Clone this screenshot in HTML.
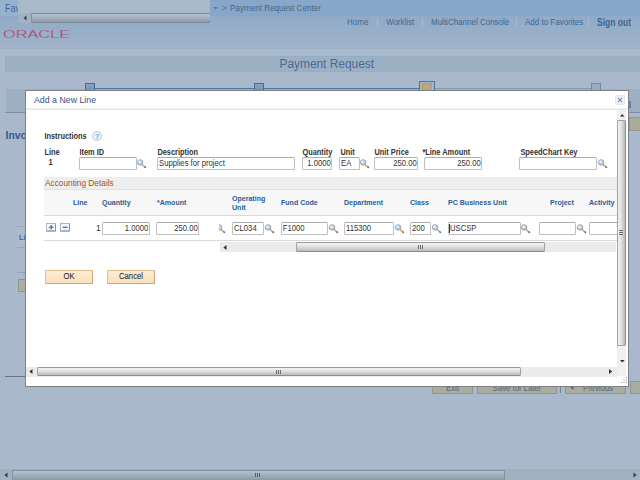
<!DOCTYPE html>
<html>
<head>
<meta charset="utf-8">
<title>Payment Request</title>
<style>
html,body{margin:0;padding:0;}
body{width:640px;height:480px;overflow:hidden;position:relative;background:#a9b8ca;font-family:"Liberation Sans",Arial,sans-serif;font-size:9px;color:#333;}
.abs{position:absolute;}
div,span{box-sizing:border-box;}
/* ---------- dimmed page behind ---------- */
#topnav{left:0;top:0;width:640px;height:16px;background:#86a7c9;}
#hdr{left:0;top:16px;width:640px;height:34px;background:linear-gradient(#90aac8,#a2b4c9);}
#band{left:0;top:50px;width:640px;height:6px;background:#a7b9cc;border-top:1px solid #b0c0d0;}
#fav{left:5px;top:2.5px;font-size:9px;color:#48678f;}
#ovl{overflow:hidden;left:17.5px;top:0;width:192.5px;height:22.8px;background:#a9bacb;}
#ovl .sb{left:0;top:13px;width:193px;height:10px;background:#a3b2c1;}
#ovl .thumb{left:13px;top:13px;width:190px;height:10px;background:linear-gradient(#b6c2ce,#a3b0bd 50%,#8a98a7);border:1px solid #8391a0;border-top-color:#7e8c9b;border-bottom-color:#7d8a98;border-radius:1px;}
#crumb{left:213px;top:3.5px;font-size:8px;color:#4a6688;white-space:nowrap;}
.lnk{top:17.5px;font-size:8px;color:#3f668f;white-space:nowrap;}
.sep{top:18px;width:1px;height:9px;background:#a7bad0;}
#ptitle{left:5px;top:55.5px;width:640px;height:16px;background:#9cb0c4;border:1px solid #98adc2;}
#ptitle span{left:273.5px;top:0px;font-size:11.9px;color:#4a6a92;white-space:nowrap;}
.trainline{top:87.8px;height:1.5px;background:#4f76a6;}
.stop{width:10px;height:10px;top:83px;background:linear-gradient(#8ca5c3,#7090b4 80%);border:1px solid #436b9f;z-index:2;}
.pbtn{top:381px;height:13px;background:#a9ad9e;border:1px solid #92968b;font-size:7.7px;color:#4b6582;text-align:center;line-height:14px;}
/* ---------- modal ---------- */
#modal{z-index:5;left:25px;top:90px;width:604px;height:297px;background:#fff;border:1px solid #7f7f86;}
#mi{left:-1px;top:0;width:0;height:0;}
#mtitle{left:9px;top:4px;font-size:8.8px;color:#2d5487;white-space:nowrap;}
#mline{left:1px;top:17px;width:602px;height:2px;background:linear-gradient(#f1f5f4,#dde6e4);}
#mclose{left:590px;top:4px;width:10px;height:10px;border:1px solid #e6e9ea;border-radius:2px;background:#f0f2f2;}
.lbl{font-size:7.4px;font-weight:bold;color:#333;white-space:nowrap;}
.hl{font-size:7.05px;font-weight:bold;color:#2a5c9c;white-space:nowrap;line-height:9px;}
.inp{height:13px;border:1px solid #c0c0c0;border-top-color:#adadad;border-radius:1.5px;background:#fff;font-size:7.7px;line-height:12px;color:#333;padding:0 1px 0 1px;white-space:nowrap;overflow:hidden;}
.r{text-align:right;padding-right:0.2px !important;}
.btn{height:14px;width:48px;background:linear-gradient(#fcecd2,#f8dfba);border:1px solid #e2bf93;border-right-color:#d0a676;border-bottom-color:#d0a676;border-radius:1px;font-size:7.7px;text-align:center;line-height:12px;color:#111;}
svg{position:absolute;overflow:visible;}
.t{display:inline-block;transform:scaleY(1.22);}
.lnk,#fav,#crumb,#crumb2{transform:scaleY(1.18);}
#mtitle,#ptitle span{transform:scaleY(1.1);}
.lbl{transform:scaleY(1.13);margin-top:-0.5px;margin-left:0.4px}
.hl{transform:scaleY(1.03);}
</style>
</head>
<body>
<!-- dimmed background page -->
<div id="topnav" class="abs"></div>
<div id="hdr" class="abs"></div>
<div id="band" class="abs"></div>
<div class="abs" style="left:0;top:0;width:18px;height:16px;background:#96b2cf"></div>
<div id="fav" class="abs">Fav</div>
<div id="ovl" class="abs"><div class="sb abs"></div><div class="thumb abs"></div>
<svg style="left:5px;top:15px" width="4" height="6"><path d="M3.5 0.5 L0.5 3 L3.5 5.5Z" fill="#3a4450"/></svg></div>
<svg style="left:213px;top:7px" width="5" height="3"><path d="M0 0H5L2.5 2.6Z" fill="#5779a6"/></svg><div id="crumb" class="abs" style="left:222px">&gt;</div><div id="crumb2" class="abs" style="left:230px;top:3.5px;font-size:8.1px;color:#4a6688;white-space:nowrap">Payment Request Center</div>

<div class="abs lnk" style="left:347px">Home</div>
<div class="abs sep" style="left:377px"></div>
<div class="abs lnk" style="left:386px">Worklist</div>
<div class="abs sep" style="left:422px"></div>
<div class="abs lnk" style="left:431px">MultiChannel Console</div>
<div class="abs sep" style="left:516px"></div>
<div class="abs lnk" style="left:525px">Add to Favorites</div>
<div class="abs sep" style="left:588px"></div>
<div class="abs lnk" style="left:597px;font-weight:bold;top:17px;font-size:8.5px">Sign out</div>

<svg style="left:3px;top:30px" width="68" height="9" viewBox="0 0 68 9">
<text x="0" y="8" font-family="Liberation Sans, Arial, sans-serif" font-size="10.8" fill="#c03053" stroke="#93acc8" stroke-width="0.3" textLength="67" lengthAdjust="spacingAndGlyphs">ORACLE</text>
</svg>

<div id="ptitle" class="abs"><span class="abs">Payment Request</span></div>

<div class="abs trainline" style="left:90px;width:340px"></div>
<div class="abs trainline" style="left:430px;width:166px;top:88.3px;height:1px;background:#8599b3"></div>
<div class="abs stop" style="left:85px"></div>
<div class="abs stop" style="left:254px"></div>
<div class="abs" style="z-index:2;left:419px;top:80.5px;width:16px;height:12px;background:#a3b5cb;border:1.3px solid #4c74a5;"></div>
<div class="abs" style="z-index:2;left:421.7px;top:83px;width:10.6px;height:10px;background:#b8a67e;border:1px solid #c39a52;"></div>
<div class="abs stop" style="left:591px;background:#9aacc3;border-color:#7189a9"></div>

<div class="abs" style="left:5.5px;top:129.7px;font-size:10.4px;font-weight:bold;color:#34598f;">Invo</div>
<div class="abs" style="left:6px;top:89px;width:640px;height:23px;background:#9fafc2;"></div>
<div class="abs" style="left:5px;top:112px;width:640px;height:1px;background:#7f8fa3;"></div>
<div class="abs" style="left:17px;top:226.3px;width:9px;height:1px;background:#93a5ba;"></div>
<div class="abs" style="left:17px;top:227px;width:9px;height:20px;background:#acbbcc;"></div>
<div class="abs" style="left:17px;top:247px;width:9px;height:1px;background:#93a5ba;"></div>
<div class="abs" style="left:17px;top:272px;width:9px;height:1px;background:#93a5ba;"></div>
<div class="abs" style="left:19px;top:232.5px;font-size:7.5px;font-weight:bold;color:#3d66a0;">Li</div>
<div class="abs" style="left:5px;top:376px;width:20px;height:1px;background:#66748a;"></div>
<div class="abs" style="left:18px;top:279px;width:8px;height:13px;background:#adae9f;border:1px solid #8f9488;"></div>

<div class="abs pbtn" style="left:432px;width:41px;"><span class="t">Exit</span></div>
<div class="abs pbtn" style="left:477px;width:80px;"><span class="t">Save for Later</span></div>
<div class="abs pbtn" style="left:565px;width:61px;padding-left:5px"><span class="t">Previous</span></div>
<svg style="left:570px;top:385px" width="4" height="5"><path d="M3.5 0 L0.3 2.5 L3.5 5Z" fill="#3d6ca8"/></svg>
<div class="abs pbtn" style="left:630px;width:20px;"></div>
<div class="abs" style="left:560px;top:384px;width:1px;height:9px;background:#6f86a4;"></div>

<!-- right side bits of page peeking -->
<div class="abs" style="left:629px;top:101px;width:1.6px;height:7px;background:#5f82ad;"></div>
<div class="abs" style="left:629px;top:117px;width:12px;height:14px;background:#a9ab9d;border:1px solid #94978c;"></div>

<!-- page horizontal scrollbar -->
<div class="abs" style="left:0;top:469.3px;width:640px;height:11px;background:#a2b0bf;"></div>
<div class="abs" style="left:12px;top:469.5px;width:492.5px;height:11px;background:linear-gradient(#b5c1cd,#a0adbb 50%,#8a98a7);border:1px solid #8291a1;border-top-color:#7c8a9a;border-radius:1px;"></div>
<svg style="left:4px;top:472px" width="4" height="6"><path d="M3.5 0.5 L0.5 3 L3.5 5.5Z" fill="#2e3946"/></svg>
<svg style="left:633px;top:472px" width="4" height="6"><path d="M0.5 0.5 L3.5 3 L0.5 5.5Z" fill="#2e3946"/></svg>
<div class="abs" style="left:255px;top:473px;width:5px;height:4px;background:repeating-linear-gradient(90deg,#55616f 0,#55616f 1px,transparent 1px,transparent 2px);"></div>

<!-- modal -->
<div id="modal" class="abs"><div id="mi" class="abs">
  <div id="mtitle" class="abs">Add a New Line</div>
  <div id="mline" class="abs"></div>
  <div id="mclose" class="abs"><svg style="left:2px;top:2px" width="4" height="4"><path d="M0 0L4 4M4 0L0 4" stroke="#7b9bba" stroke-width="1.1"/></svg></div>
  <div class="abs lbl" style="left:19px;top:41px">Instructions</div>
  <svg style="left:67px;top:40px" width="10" height="10" viewBox="0 0 10 10"><circle cx="5" cy="5" r="4.4" fill="#eef4fa" stroke="#b0c5dc" stroke-width="1"/><text x="5" y="7.6" text-anchor="middle" font-family="Liberation Sans, Arial, sans-serif" font-size="7.5" font-weight="bold" fill="#7aa1d0">?</text></svg>
  <div class="abs lbl" style="left:19px;top:57px">Line</div>
  <div class="abs lbl" style="left:54px;top:57px">Item ID</div>
  <div class="abs lbl" style="left:132px;top:57px">Description</div>
  <div class="abs lbl" style="left:277px;top:57px">Quantity</div>
  <div class="abs lbl" style="left:315px;top:57px">Unit</div>
  <div class="abs lbl" style="left:349px;top:57px">Unit Price</div>
  <div class="abs lbl" style="left:397px;top:57px">*Line Amount</div>
  <div class="abs lbl" style="left:495px;top:57px">SpeedChart Key</div>
  <div class="abs lbl" style="left:23px;top:67px">1</div>
  <div class="abs inp" style="left:54px;top:66px;width:58px"></div>
  <div class="abs inp" style="left:132px;top:66px;width:138px"><span class="t">Supplies for project</span></div>
  <div class="abs inp r" style="left:277px;top:66px;width:30px"><span class="t">1.0000</span></div>
  <div class="abs inp" style="left:314px;top:66px;width:21px"><span class="t">EA</span></div>
  <div class="abs inp r" style="left:349px;top:66px;width:44px"><span class="t">250.00</span></div>
  <div class="abs inp r" style="left:399px;top:66px;width:58px"><span class="t">250.00</span></div>
  <div class="abs inp" style="left:494px;top:66px;width:78px"></div>
  <svg style="left:112.3px;top:67px" width="10" height="10" viewBox="0 0 10 10"><path d="M5.4 6.9L8.1 9.1" stroke="#dfa458" stroke-width="1.5" stroke-linecap="round"/><path d="M7.9 8.9L8.5 9.4" stroke="#4f74ad" stroke-width="1.4" stroke-linecap="round"/><circle cx="3.1" cy="4.4" r="2.75" fill="#a9d3f4" stroke="#988f8c" stroke-width="0.75"/><circle cx="2.5" cy="3.7" r="1.3" fill="#e6f4fe"/></svg>
  <svg style="left:335px;top:67px" width="10" height="10" viewBox="0 0 10 10"><path d="M5.4 6.9L8.1 9.1" stroke="#dfa458" stroke-width="1.5" stroke-linecap="round"/><path d="M7.9 8.9L8.5 9.4" stroke="#4f74ad" stroke-width="1.4" stroke-linecap="round"/><circle cx="3.1" cy="4.4" r="2.75" fill="#a9d3f4" stroke="#988f8c" stroke-width="0.75"/><circle cx="2.5" cy="3.7" r="1.3" fill="#e6f4fe"/></svg>
  <svg style="left:572.5px;top:67px" width="10" height="10" viewBox="0 0 10 10"><path d="M5.4 6.9L8.1 9.1" stroke="#dfa458" stroke-width="1.5" stroke-linecap="round"/><path d="M7.9 8.9L8.5 9.4" stroke="#4f74ad" stroke-width="1.4" stroke-linecap="round"/><circle cx="3.1" cy="4.4" r="2.75" fill="#a9d3f4" stroke="#988f8c" stroke-width="0.75"/><circle cx="2.5" cy="3.7" r="1.3" fill="#e6f4fe"/></svg>
  <div class="abs" style="left:19px;top:86px;width:573px;height:13px;background:#eeeeee;border-bottom:1px solid #dde3e3;overflow:hidden"><span class="abs acc" style="left:1px;top:1px;font-size:8.3px;line-height:10px;color:#a8521e;white-space:nowrap">Accounting Details</span></div>
  <div class="abs" style="left:19px;top:99px;width:573px;height:26px;background:#f7f7f7;border-bottom:1px solid #d9dadb;"></div>
  <div class="abs hl" style="left:48px;top:107px">Line</div>
  <div class="abs hl" style="left:77px;top:107px">Quantity</div>
  <div class="abs hl" style="left:132px;top:107px">*Amount</div>
  <div class="abs hl" style="left:256px;top:107px">Fund Code</div>
  <div class="abs hl" style="left:319px;top:107px">Department</div>
  <div class="abs hl" style="left:385px;top:107px">Class</div>
  <div class="abs hl" style="left:423px;top:107px">PC Business Unit</div>
  <div class="abs hl" style="left:525px;top:107px">Project</div>
  <div class="abs hl" style="left:564px;top:107px">Activity</div>
  <div class="abs hl" style="left:207px;top:103px">Operating<br>Unit</div>
  <div class="abs" style="left:19px;top:149.2px;width:573px;height:1px;background:#d9dadb;"></div>
  <svg style="left:21px;top:132px" width="10" height="8.5" viewBox="0 0 10 8.5"><rect x="0.5" y="0.5" width="9" height="7.5" fill="#f4f7fb" stroke="#a9b7ca"/><path d="M0.5 8H9.5V0.5" fill="none" stroke="#7f90aa"/><path d="M2.7 4.25H7.6M5.15 2.1V6.4" stroke="#2a5aa2" stroke-width="1.1"/></svg>
  <svg style="left:35px;top:132px" width="10" height="8.5" viewBox="0 0 10 8.5"><rect x="0.5" y="0.5" width="9" height="7.5" fill="#f4f7fb" stroke="#a9b7ca"/><path d="M0.5 8H9.5V0.5" fill="none" stroke="#7f90aa"/><path d="M2.7 4.25H7.6" stroke="#2a5aa2" stroke-width="1.1"/></svg>
  <div class="abs" style="left:71px;top:132px;font-size:8.5px;color:#333">1</div>
  <div class="abs inp r" style="left:77px;top:131px;width:47.5px"><span class="t">1.0000</span></div>
  <div class="abs inp r" style="left:131px;top:131px;width:43px"><span class="t">250.00</span></div>
  <div class="abs inp" style="left:207px;top:131px;width:32px"><span class="t">CL034</span></div>
  <div class="abs inp" style="left:255.7px;top:131px;width:47.5px"><span class="t">F1000</span></div>
  <div class="abs inp" style="left:319px;top:131px;width:50px"><span class="t">115300</span></div>
  <div class="abs inp" style="left:385px;top:131px;width:21px"><span class="t">200</span></div>
  <div class="abs inp" style="left:423px;top:131px;width:73px"><span class="t">USCSP</span></div>
  <div class="abs inp" style="left:514px;top:131px;width:37px"></div>
  <div class="abs inp" style="left:564px;top:131px;width:31px"></div>
  <svg style="left:240px;top:132px" width="10" height="10" viewBox="0 0 10 10"><path d="M5.4 6.9L8.1 9.1" stroke="#dfa458" stroke-width="1.5" stroke-linecap="round"/><path d="M7.9 8.9L8.5 9.4" stroke="#4f74ad" stroke-width="1.4" stroke-linecap="round"/><circle cx="3.1" cy="4.4" r="2.75" fill="#a9d3f4" stroke="#988f8c" stroke-width="0.75"/><circle cx="2.5" cy="3.7" r="1.3" fill="#e6f4fe"/></svg>
  <svg style="left:304px;top:132px" width="10" height="10" viewBox="0 0 10 10"><path d="M5.4 6.9L8.1 9.1" stroke="#dfa458" stroke-width="1.5" stroke-linecap="round"/><path d="M7.9 8.9L8.5 9.4" stroke="#4f74ad" stroke-width="1.4" stroke-linecap="round"/><circle cx="3.1" cy="4.4" r="2.75" fill="#a9d3f4" stroke="#988f8c" stroke-width="0.75"/><circle cx="2.5" cy="3.7" r="1.3" fill="#e6f4fe"/></svg>
  <svg style="left:369.7px;top:132px" width="10" height="10" viewBox="0 0 10 10"><path d="M5.4 6.9L8.1 9.1" stroke="#dfa458" stroke-width="1.5" stroke-linecap="round"/><path d="M7.9 8.9L8.5 9.4" stroke="#4f74ad" stroke-width="1.4" stroke-linecap="round"/><circle cx="3.1" cy="4.4" r="2.75" fill="#a9d3f4" stroke="#988f8c" stroke-width="0.75"/><circle cx="2.5" cy="3.7" r="1.3" fill="#e6f4fe"/></svg>
  <svg style="left:407.2px;top:132px" width="10" height="10" viewBox="0 0 10 10"><path d="M5.4 6.9L8.1 9.1" stroke="#dfa458" stroke-width="1.5" stroke-linecap="round"/><path d="M7.9 8.9L8.5 9.4" stroke="#4f74ad" stroke-width="1.4" stroke-linecap="round"/><circle cx="3.1" cy="4.4" r="2.75" fill="#a9d3f4" stroke="#988f8c" stroke-width="0.75"/><circle cx="2.5" cy="3.7" r="1.3" fill="#e6f4fe"/></svg>
  <svg style="left:496px;top:132px" width="10" height="10" viewBox="0 0 10 10"><path d="M5.4 6.9L8.1 9.1" stroke="#dfa458" stroke-width="1.5" stroke-linecap="round"/><path d="M7.9 8.9L8.5 9.4" stroke="#4f74ad" stroke-width="1.4" stroke-linecap="round"/><circle cx="3.1" cy="4.4" r="2.75" fill="#a9d3f4" stroke="#988f8c" stroke-width="0.75"/><circle cx="2.5" cy="3.7" r="1.3" fill="#e6f4fe"/></svg>
  <svg style="left:551.8px;top:132px" width="10" height="10" viewBox="0 0 10 10"><path d="M5.4 6.9L8.1 9.1" stroke="#dfa458" stroke-width="1.5" stroke-linecap="round"/><path d="M7.9 8.9L8.5 9.4" stroke="#4f74ad" stroke-width="1.4" stroke-linecap="round"/><circle cx="3.1" cy="4.4" r="2.75" fill="#a9d3f4" stroke="#988f8c" stroke-width="0.75"/><circle cx="2.5" cy="3.7" r="1.3" fill="#e6f4fe"/></svg>
  <div class="abs" style="left:423.6px;top:132.6px;width:1.6px;height:9.6px;background:#1c2c70"></div>
  <div class="abs" style="left:193.7px;top:132px;width:8px;height:11px;overflow:hidden"><svg style="left:-2.5px;top:0" width="10" height="10" viewBox="0 0 10 10"><path d="M5.4 6.9L8.1 9.1" stroke="#dfa458" stroke-width="1.5" stroke-linecap="round"/><path d="M7.9 8.9L8.5 9.4" stroke="#4f74ad" stroke-width="1.4" stroke-linecap="round"/><circle cx="3.1" cy="4.4" r="2.75" fill="#a9d3f4" stroke="#988f8c" stroke-width="0.75"/><circle cx="2.5" cy="3.7" r="1.3" fill="#e6f4fe"/></svg></div>
  <div class="abs" style="left:195px;top:151px;width:396px;height:10px;background:#ebebeb;"></div>
  <div class="abs" style="left:271px;top:151px;width:249px;height:10px;background:linear-gradient(#f3f3f3,#dedede 50%,#b9b9b9);border:1px solid #a2a2a2;border-top-color:#9a9a9a;border-bottom-color:#8e8e8e;border-radius:1.5px;"></div>
  <svg style="left:198px;top:153.5px" width="4" height="5"><path d="M3.5 0 L0.3 2.5 L3.5 5Z" fill="#333"/></svg>
  <div class="abs" style="left:393px;top:154px;width:5px;height:4px;background:repeating-linear-gradient(90deg,#6a6a6a 0,#6a6a6a 1px,transparent 1px,transparent 2px);"></div>
  <div class="abs btn" style="left:20px;top:179px"><span class="t">OK</span></div>
  <div class="abs btn" style="left:82px;top:179px"><span class="t">Cancel</span></div>
  <div class="abs" style="left:592px;top:19px;width:9px;height:266px;background:#f0f0f0;"></div>
  <div class="abs" style="left:592px;top:29px;width:9px;height:226px;background:linear-gradient(90deg,#f3f3f3,#dedede 50%,#b9b9b9);border:1px solid #a2a2a2;border-right-color:#8e8e8e;border-radius:1.5px;"></div>
  <svg style="left:595.2px;top:22.6px" width="4.4" height="2.6"><path d="M0 2.6 L2.2 0 L4.4 2.6Z" fill="#2e2e2e"/></svg>
  <svg style="left:594.8px;top:268.8px" width="4.6" height="2.6"><path d="M0 0 L2.3 2.6 L4.6 0Z" fill="#2e2e2e"/></svg>
  <div class="abs" style="left:594px;top:139px;width:4px;height:6px;background:repeating-linear-gradient(#6a6a6a 0,#6a6a6a 1px,transparent 1px,transparent 2px);"></div>
  <div class="abs" style="left:1px;top:275.8px;width:591px;height:10px;background:#ebebeb;"></div>
  <div class="abs" style="left:12px;top:276px;width:484px;height:9px;background:linear-gradient(#f3f3f3,#dedede 50%,#b9b9b9);border:1px solid #a2a2a2;border-top-color:#9a9a9a;border-bottom-color:#8e8e8e;border-radius:1.5px;"></div>
  <svg style="left:3.6999999999999993px;top:278px" width="4" height="5"><path d="M3.5 0 L0.3 2.5 L3.5 5Z" fill="#333"/></svg>
  <svg style="left:584.3px;top:278px" width="4" height="5"><path d="M0 0 L3.2 2.5 L0 5Z" fill="#333"/></svg>
  <div class="abs" style="left:251px;top:278.5px;width:5px;height:4px;background:repeating-linear-gradient(90deg,#6a6a6a 0,#6a6a6a 1px,transparent 1px,transparent 2px);"></div>
  <svg style="left:596.3px;top:286.3px" width="7" height="7"><g fill="#a9a9a9"><rect x="4.8" y="0" width="1.2" height="1.2"/><rect x="2.4" y="2.4" width="1.2" height="1.2"/><rect x="4.8" y="2.4" width="1.2" height="1.2"/><rect x="0" y="4.8" width="1.2" height="1.2"/><rect x="2.4" y="4.8" width="1.2" height="1.2"/><rect x="4.8" y="4.8" width="1.2" height="1.2"/></g></svg>
</div></div>
</body>
</html>
